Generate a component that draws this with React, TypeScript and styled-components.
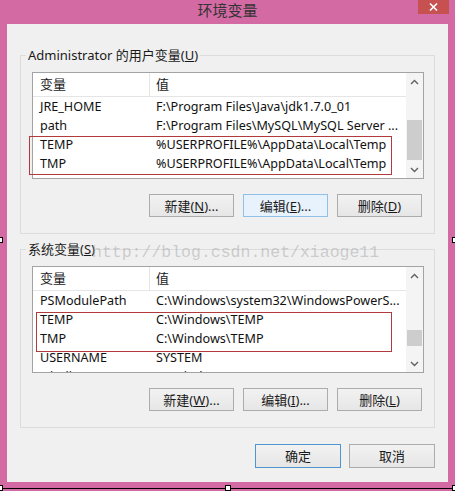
import React from 'react';
import styled, { createGlobalStyle } from 'styled-components';

const GlobalStyle = createGlobalStyle`
  html, body {
    margin: 0;
    padding: 0;
    background: #fff;
  }
  body {
    font-family: "Noto Sans", "Noto Sans CJK SC", sans-serif;
  }
`;

const Window = styled.div`
  position: relative;
  width: 455px;
  height: 491px;
  background: #d46aa4;
  display: flex;
  flex-direction: column;
  overflow: hidden;
`;

const TitleBar = styled.div`
  height: 24px;
  flex: none;
  display: grid;
  grid-template-columns: 1fr auto 1fr;
  align-items: start;
`;

const Title = styled.div`
  grid-column: 2;
  font-family: "Noto Sans CJK SC", sans-serif;
  font-size: 15px;
  line-height: 20px;
  color: #333;
`;

const CloseButton = styled.div`
  grid-column: 3;
  justify-self: end;
  width: 31px;
  height: 14px;
  margin-right: 6px;
  background: #c75050;
  display: flex;
  align-items: center;
  justify-content: center;
`;

const Client = styled.div`
  flex: 1;
  margin: 0 7px 9px;
  background: #f0f0f0;
  padding: 22px 13px 0;
  display: flex;
  flex-direction: column;
`;

const Group = styled.fieldset<{ $gap?: number }>`
  margin: ${(p) => p.$gap || 0}px 0 0;
  padding: 0;
  border: 1px solid #dcdcdc;
  min-width: 0;
`;

const GroupLabel = styled.legend`
  margin-left: 5px;
  padding: 0 2px;
  font-size: 13px;
  line-height: 18px;
  color: #1a1a1a;
`;

const GroupBody = styled.div`
  padding: 8px 10px 16px 11px;
`;

const ListView = styled.div`
  height: 107px;
  box-sizing: border-box;
  border: 1px solid #a3a3a3;
  background: #fff;
  display: grid;
  grid-template-columns: 1fr 17px;
`;

const ListBody = styled.div`
  overflow: hidden;
  display: flex;
  flex-direction: column;
`;

const HeaderRow = styled.div`
  flex: none;
  height: 24px;
  box-sizing: border-box;
  border-bottom: 1px solid #e5e5e5;
  display: flex;
`;

const HeaderCell = styled.div<{ $first?: boolean }>`
  box-sizing: border-box;
  width: ${(p) => (p.$first ? '117px' : 'auto')};
  flex: ${(p) => (p.$first ? 'none' : 1)};
  border-right: ${(p) => (p.$first ? '1px solid #e5e5e5' : 'none')};
  padding-left: ${(p) => (p.$first ? 7 : 6)}px;
  font-size: 13px;
  line-height: 23px;
  color: #1a1a1a;
`;

const Row = styled.div`
  flex: none;
  height: 19px;
  display: flex;
  font-size: 12.6px;
  line-height: 19px;
  color: #111;
  white-space: nowrap;
`;

const NameCell = styled.div`
  width: 117px;
  flex: none;
  box-sizing: border-box;
  padding-left: 7px;
  overflow: hidden;
`;

const ValueCell = styled.div`
  flex: 1;
  padding-left: 6px;
  overflow: hidden;
`;

const ScrollBar = styled.div`
  background: #f4f4f4;
  display: flex;
  flex-direction: column;
`;

const ScrollArrow = styled.div`
  height: 17px;
  flex: none;
  display: flex;
  align-items: center;
  justify-content: center;
`;

const ScrollTrack = styled.div`
  flex: 1;
`;

const Thumb = styled.div<{ $offset: number; $size: number }>`
  margin: ${(p) => p.$offset}px 1px 0;
  height: ${(p) => p.$size}px;
  background: #cdcdcd;
`;

const ButtonRow = styled.div`
  display: flex;
  justify-content: flex-end;
  gap: 9px;
  margin-top: 15px;
  padding-right: 2px;
`;

const Footer = styled.div`
  display: flex;
  justify-content: flex-end;
  gap: 8px;
  margin-top: 16px;
`;

type Variant = 'normal' | 'focused' | 'default';

const Button = styled.button<{ $variant?: Variant; $wide?: boolean }>`
  width: ${(p) => (p.$wide ? 86 : 85)}px;
  height: ${(p) => (p.$wide ? 24 : 23)}px;
  padding: 0;
  margin: 0;
  font-family: "Noto Sans", "Noto Sans CJK SC", sans-serif;
  font-size: 13px;
  line-height: 20px;
  color: #1a1a1a;
  border: 1px solid
    ${(p) =>
      p.$variant === 'focused' ? '#8ec0e8' : p.$variant === 'default' ? '#4f96d0' : '#acacac'};
  background: ${(p) =>
    p.$variant === 'focused' ? '#e8f2fc' : 'linear-gradient(#f2f2f2, #e6e6e6)'};
`;

const Annotation = styled.div<{ $x: number; $y: number; $w: number; $h: number }>`
  position: absolute;
  left: ${(p) => p.$x}px;
  top: ${(p) => p.$y}px;
  width: ${(p) => p.$w}px;
  height: ${(p) => p.$h}px;
  box-sizing: border-box;
  border: 1px solid #b03a3c;
  pointer-events: none;
`;

const Watermark = styled.div`
  position: absolute;
  left: 92px;
  top: 245px;
  font-family: "Liberation Mono", monospace;
  font-size: 16.5px;
  line-height: 16px;
  color: rgba(150, 150, 150, 0.42);
  pointer-events: none;
  white-space: nowrap;
`;

const SelectionEdge = styled.div`
  position: absolute;
  left: 0;
  right: 0;
  bottom: 2px;
  height: 1px;
  background: #000;
`;

const Handle = styled.div<{ $x: number; $y: number }>`
  position: absolute;
  left: ${(p) => p.$x}px;
  top: ${(p) => p.$y}px;
  width: 6px;
  height: 6px;
  box-sizing: border-box;
  border: 1px solid #000;
  background: #fff;
`;

const Chevron = ({ up }: { up?: boolean }) => (
  <svg width="9" height="6" viewBox="0 0 9 6">
    <polyline
      points={up ? '1,5 4.5,1.5 8,5' : '1,1 4.5,4.5 8,1'}
      fill="none"
      stroke="#606060"
      strokeWidth="1.4"
    />
  </svg>
);

interface Item {
  name: string;
  value: string;
}

interface ListProps {
  items: Item[];
  thumbOffset: number;
  thumbSize: number;
}

const VariableList: React.FC<ListProps> = (props) => (
  <ListView>
    <ListBody>
      <HeaderRow>
        <HeaderCell $first>变量</HeaderCell>
        <HeaderCell>值</HeaderCell>
      </HeaderRow>
      {props.items.map((item, i) => (
        <Row key={i}>
          <NameCell>{item.name}</NameCell>
          <ValueCell>{item.value}</ValueCell>
        </Row>
      ))}
    </ListBody>
    <ScrollBar>
      <ScrollArrow>
        <Chevron up />
      </ScrollArrow>
      <ScrollTrack>
        <Thumb $offset={props.thumbOffset} $size={props.thumbSize} />
      </ScrollTrack>
      <ScrollArrow>
        <Chevron />
      </ScrollArrow>
    </ScrollBar>
  </ListView>
);

const userVars: Item[] = [
  { name: 'JRE_HOME', value: 'F:\\Program Files\\Java\\jdk1.7.0_01' },
  { name: 'path', value: 'F:\\Program Files\\MySQL\\MySQL Server ...' },
  { name: 'TEMP', value: '%USERPROFILE%\\AppData\\Local\\Temp' },
  { name: 'TMP', value: '%USERPROFILE%\\AppData\\Local\\Temp' },
];

const systemVars: Item[] = [
  { name: 'PSModulePath', value: 'C:\\Windows\\system32\\WindowsPowerS...' },
  { name: 'TEMP', value: 'C:\\Windows\\TEMP' },
  { name: 'TMP', value: 'C:\\Windows\\TEMP' },
  { name: 'USERNAME', value: 'SYSTEM' },
  { name: 'windir', value: 'C:\\Windows' },
];

export default function App() {
  return (
    <>
      <GlobalStyle />
      <Window>
        <TitleBar>
          <Title>环境变量</Title>
          <CloseButton>
            <svg width="9" height="8" viewBox="0 0 9 8">
              <path d="M1 0.5 L8 7.5 M8 0.5 L1 7.5" stroke="#fff" strokeWidth="1.6" />
            </svg>
          </CloseButton>
        </TitleBar>
        <Client>
          <Group>
            <GroupLabel>
              Administrator 的用户变量(<u>U</u>)
            </GroupLabel>
            <GroupBody>
              <VariableList items={userVars} thumbOffset={30} thumbSize={40} />
              <ButtonRow>
                <Button>
                  新建(<u>N</u>)...
                </Button>
                <Button $variant="focused">
                  编辑(<u>E</u>)...
                </Button>
                <Button>
                  删除(<u>D</u>)
                </Button>
              </ButtonRow>
            </GroupBody>
          </Group>
          <Group $gap={6}>
            <GroupLabel>
              系统变量(<u>S</u>)
            </GroupLabel>
            <GroupBody>
              <VariableList items={systemVars} thumbOffset={46} thumbSize={16} />
              <ButtonRow>
                <Button>
                  新建(<u>W</u>)...
                </Button>
                <Button>
                  编辑(<u>I</u>)...
                </Button>
                <Button>
                  删除(<u>L</u>)
                </Button>
              </ButtonRow>
            </GroupBody>
          </Group>
          <Footer>
            <Button $wide $variant="default">确定</Button>
            <Button $wide>取消</Button>
          </Footer>
        </Client>

        <Watermark>http://blog.csdn.net/xiaoge11</Watermark>
        <Annotation $x={29} $y={136} $w={363} $h={39} />
        <Annotation $x={36} $y={312} $w={356} $h={40} />

        <SelectionEdge />
        <Handle $x={-3} $y={237} />
        <Handle $x={452} $y={237} />
        <Handle $x={-3} $y={485} />
        <Handle $x={225} $y={485} />
        <Handle $x={452} $y={485} />
      </Window>
    </>
  );
}
